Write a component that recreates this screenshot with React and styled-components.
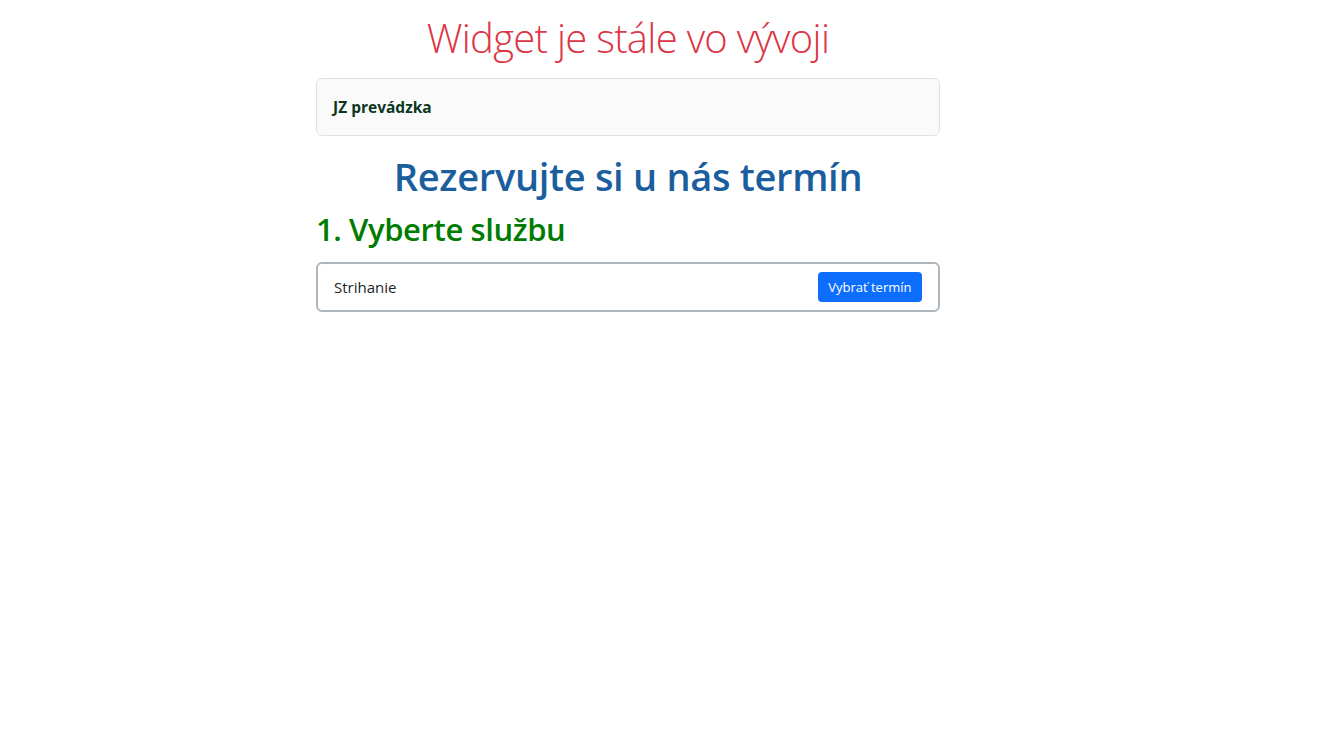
import styled, { createGlobalStyle } from "styled-components"

const GlobalStyle = createGlobalStyle`
    body {
        margin: 0;
        background: #fff;
        font-family: "Open Sans", "Noto Sans", sans-serif;
        color: #212529;
    }
`

const Page = styled.div`
    width: 1344px;
    display: flex;
    justify-content: flex-start;
    padding-left: 316px;
    box-sizing: border-box;
`
const Column = styled.div`
    width: 624px;
    display: flex;
    flex-direction: column;
`
const Banner = styled.h1`
    margin: 14px 0 16px;
    text-align: center;
    font-size: 40px;
    font-weight: 300;
    line-height: 48px;
    color: #dc3545;
    letter-spacing: -0.7px;
`
const Card = styled.div`
    background-color: #fafafa;
    border: 1px solid #dee2e6;
    border-radius: 6px;
    padding: 16px;
`
const ShopName = styled.div`
    font-size: 15.5px;
    font-weight: 700;
    line-height: 24px;
    color: #0a3622;
`
const Heading = styled.h1`
    margin: 18px 0 11px;
    text-align: center;
    font-size: 38px;
    font-weight: 600;
    line-height: 45.6px;
    color: #1b5e9e;
    letter-spacing: -0.3px;
`
const Step = styled.h2`
    margin: 0 0 14px;
    font-size: 31px;
    font-weight: 600;
    line-height: 37.2px;
    color: #007c00;
    letter-spacing: -0.4px;
`
const Service = styled.div`
    display: flex;
    align-items: center;
    justify-content: space-between;
    border: 2px solid #adb5bd;
    border-radius: 6px;
    padding: 8px 16px;
`
const ServiceName = styled.span`
    font-size: 15px;
    color: #212529;
`
const Button = styled.button`
    border: none;
    background-color: #0d6efd;
    color: #fff;
    font-family: inherit;
    font-size: 13px;
    line-height: 20px;
    padding: 5px 10.5px;
    border-radius: 4px;
    cursor: pointer;
`

export default function App() {
    return (
        <>
            <GlobalStyle />
            <Page>
                <Column>
                    <Banner>Widget je stále vo vývoji</Banner>
                    <Card>
                        <ShopName>JZ prevádzka</ShopName>
                    </Card>
                    <Heading>Rezervujte si u nás termín</Heading>
                    <Step>1. Vyberte službu</Step>
                    <Service>
                        <ServiceName>Strihanie</ServiceName>
                        <Button>Vybrať termín</Button>
                    </Service>
                </Column>
            </Page>
        </>
    )
}
